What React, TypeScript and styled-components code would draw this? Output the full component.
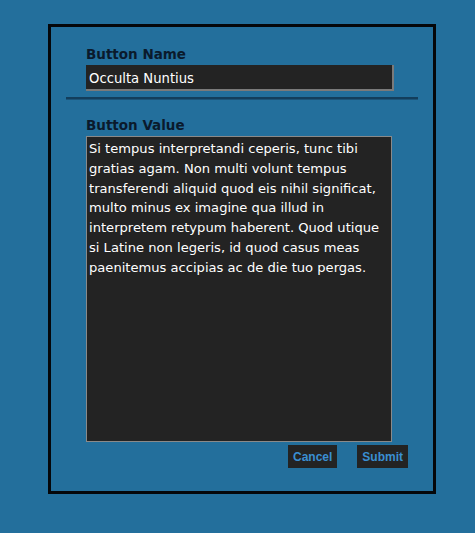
import React, { useState } from 'react';
import styled, { createGlobalStyle } from 'styled-components';

const GlobalStyle = createGlobalStyle`
  html, body {
    margin: 0;
    padding: 0;
    background: #236f9c;
    font-family: 'DejaVu Sans', 'Open Sans', sans-serif;
  }
`;

const Page = styled.div`
  padding: 24px 39px 40px 48px;
`;

const Panel = styled.form`
  border: 3px solid #05070a;
  padding: 16px 0 23px;
  box-sizing: border-box;
  height: 470px;
`;

const Field = styled.div`
  padding: 0 0 0 35px;
  display: flex;
  flex-direction: column;
`;

const Label = styled.label`
  font-size: 13.5px;
  font-weight: bold;
  color: #0a1a2c;
  line-height: 22px;
`;

const NameInput = styled.input`
  width: 308px;
  height: 26px;
  box-sizing: border-box;
  background: #232323;
  color: #ffffff;
  border: none;
  border-right: 2px solid #7a7a7a;
  border-bottom: 2px solid #7a7a7a;
  padding: 2px 3px 0;
  font-family: 'DejaVu Sans', 'Open Sans', sans-serif;
  font-size: 13.2px;
  outline: none;
`;

const Divider = styled.hr`
  margin: 6px 15px 14px;
  height: 0;
  border: none;
  border-top: 2px solid #133e5c;
  border-bottom: 1px solid #1b5479;
`;

const ValueArea = styled.textarea`
  width: 306px;
  height: 306px;
  box-sizing: border-box;
  background: #232323;
  color: #ffffff;
  border: 1px solid #8a8a8a;
  padding: 2px 2px;
  font-family: 'DejaVu Sans', 'Open Sans', sans-serif;
  font-size: 13.1px;
  line-height: 19.8px;
  resize: none;
  outline: none;
`;

const Actions = styled.div`
  display: flex;
  justify-content: flex-end;
  gap: 20px;
  padding: 3px 25px 0 0;
`;

const ActionButton = styled.button`
  background: #232323;
  color: #3a8fd2;
  border: none;
  height: 23px;
  padding: 0 5px;
  font-family: 'Liberation Sans', Arial, sans-serif;
  font-weight: bold;
  font-size: 12px;
  cursor: pointer;
`;

const App: React.FC = () => {
  const [name, setName] = useState('Occulta Nuntius');
  const [value, setValue] = useState(
    'Si tempus interpretandi ceperis, tunc tibi gratias agam. Non multi volunt tempus transferendi aliquid quod eis nihil significat, multo minus ex imagine qua illud in interpretem retypum haberent. Quod utique si Latine non legeris, id quod casus meas paenitemus accipias ac de die tuo pergas.'
  );

  return (
    <Page>
      <GlobalStyle />
      <Panel onSubmit={(e) => e.preventDefault()}>
        <Field>
          <Label htmlFor="button-name">Button Name</Label>
          <NameInput id="button-name" value={name} onChange={(e) => setName(e.target.value)} />
        </Field>
        <Divider />
        <Field>
          <Label htmlFor="button-value">Button Value</Label>
          <ValueArea id="button-value" value={value} onChange={(e) => setValue(e.target.value)} />
        </Field>
        <Actions>
          <ActionButton type="button">Cancel</ActionButton>
          <ActionButton type="submit">Submit</ActionButton>
        </Actions>
      </Panel>
    </Page>
  );
};

export default App;
